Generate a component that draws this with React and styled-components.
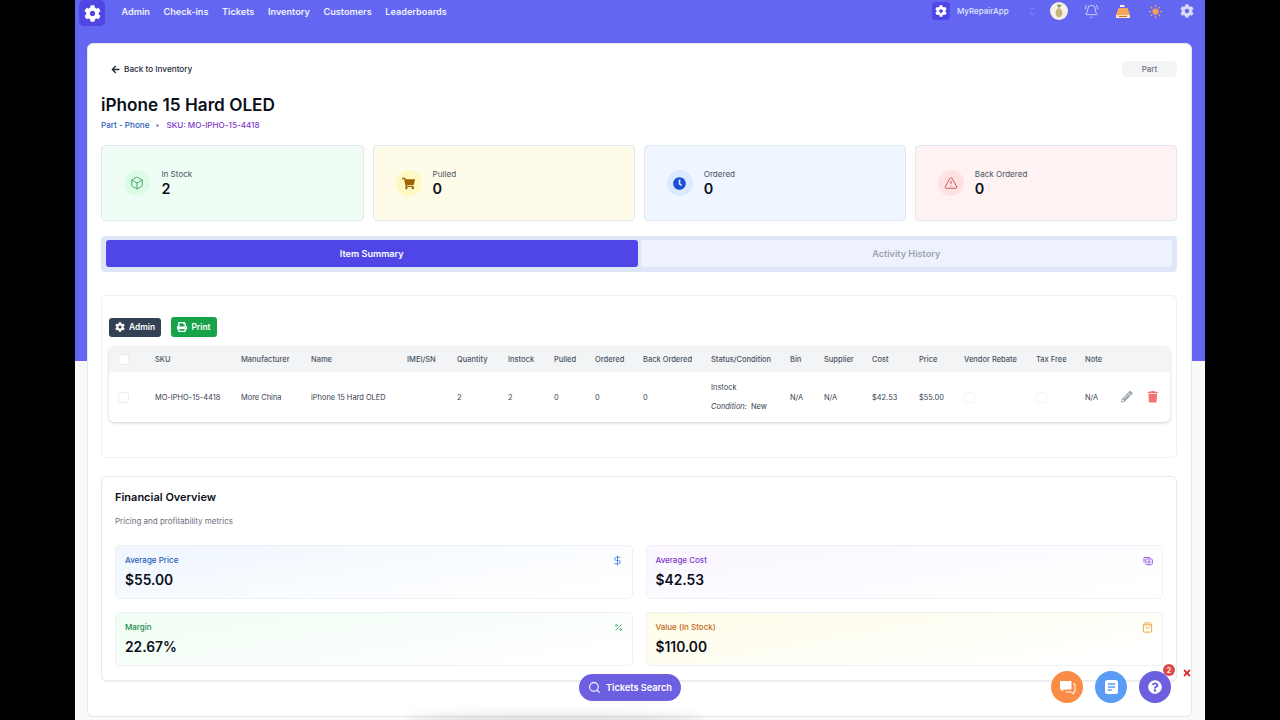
import React from "react";
import styled, { createGlobalStyle } from "styled-components";
import { FaCog, FaPrint, FaShoppingCart, FaClock, FaPencilAlt, FaTrash, FaQuestionCircle, FaTimes, FaArrowLeft } from "react-icons/fa";
import { Box, TriangleAlert, DollarSign, Percent, ShoppingBag, BellRing, ChevronsUpDown, Sun, Search } from "lucide-react";

const Global = createGlobalStyle`
  html, body { margin: 0; padding: 0; background: #000; overflow: hidden; }
  body { font-family: Inter, "Liberation Sans", sans-serif; color: #111827; }
`;

const Stage = styled.div`
  position: relative; width: 1130px; height: 720px; margin: 0 auto; overflow: hidden;
  background: linear-gradient(#6366f1 361px, #f9fafb 361px);
`;
const TopBar = styled.header`
  height: 26px; padding: 0 2px 0 4px; margin-bottom: 17px; display: flex; align-items: center; gap: 16.5px;
`;
const Logo = styled.div`
  width: 26px; height: 26px; border-radius: 5px; background: #4f46e5; color: #fff;
  display: flex; align-items: center; justify-content: center; font-size: 17px;
`;
const Nav = styled.nav`display: flex; gap: 13.6px; flex: 1; margin-bottom: 3px;`;
const NavLink = styled.a`font-size: 9.15px; font-weight: 600; color: #eef2ff; line-height: 23px;`;
const Tray = styled.div`display: flex; align-items: center; height: 22px; margin-bottom: 4px;`;
const TeamLogo = styled.div`
  width: 18px; height: 18px; border-radius: 4px; background: #4f46e5; color: #fff;
  display: flex; align-items: center; justify-content: center; font-size: 12px; margin-right: 7px;
`;
const TeamName = styled.span`width: 65px; font-size: 8px; font-weight: 500; color: #e0e7ff;`;
const Stepper = styled.span`width: 21px; display: flex; align-items: center; justify-content: center; color: #8f92f7;`;
const TrayIcon = styled.span`
  width: 32px; display: flex; align-items: center; justify-content: center; color: ${p => p.$c || "#e0e7ff"};
`;

const Card = styled.main`
  margin: 0 13px 0 12px; height: 674px; box-sizing: border-box; background: #fff; border-radius: 6px;
  border: 1px solid #e5e7eb; padding: 17px 14px 0 13px;
`;
const BackRow = styled.div`display: flex; justify-content: space-between; align-items: center; height: 16px; padding-left: 10px;`;
const BackLink = styled.a`display: flex; align-items: center; gap: 4px; font-size: 8.2px; font-weight: 500; color: #1f2937;`;
const TypeBadge = styled.span`
  width: 55px; height: 16px; border-radius: 5px; background: #f3f4f6; color: #6b7280; font-size: 8px; font-weight: 500;
  display: flex; align-items: center; justify-content: center;
`;
const Title = styled.h1`margin: 17px 0 0; font-size: 17.2px; line-height: 22px; font-weight: 600; color: #0b0f19;`;
const Sub = styled.div`display: flex; align-items: center; gap: 7px; margin-top: 4px; font-size: 8.1px; line-height: 11px; font-weight: 500;`;
const SubType = styled.span`color: #2b5cb8;`;
const SubSku = styled.span`color: #7e3ac8;`;
const Dot = styled.i`width: 3px; height: 3px; border-radius: 50%; background: #9ca3af;`;

const Stats = styled.section`display: grid; grid-template-columns: repeat(4, 1fr); gap: 9px; margin: 14px 0 0 .4px;`;
const Stat = styled.div`
  height: 76px; box-sizing: border-box; border: 1px solid #e1e7ec; border-radius: 4px; background: ${p => p.$bg};
  display: flex; align-items: center; gap: 11px; padding-left: 22px;
`;
const StatIcon = styled.div`
  width: 26px; height: 26px; border-radius: 50%; background: ${p => p.$bg}; color: ${p => p.$c};
  display: flex; align-items: center; justify-content: center; font-size: 13px;
`;
const StatLabel = styled.div`font-size: 8.1px; line-height: 10px; color: #4b5563;`;
const StatValue = styled.div`font-size: 14.4px; line-height: 18px; padding-top: 1px; font-weight: 600; color: #0b0f19;`;

const Tabs = styled.div`
  margin-top: 15px; height: 36px; box-sizing: border-box; padding: 4px 5px 5px; background: #e0e6f9; border-radius: 4px;
  display: grid; grid-template-columns: 1fr 1fr; gap: 3px;
`;
const Tab = styled.div`
  border-radius: 3px; display: flex; align-items: center; justify-content: center; font-size: 9.1px; font-weight: 600;
  background: ${p => p.$on ? "#4f46e5" : "#eef2ff"}; color: ${p => p.$on ? "#fff" : "#9ca3af"};
`;

const Panel = styled.section`
  border: 1px solid #f0f1f4; border-radius: 5px; background: #fff; box-sizing: border-box; height: ${p => p.$h}px; margin-top: ${p => p.$mt}px;
`;
const RaisedPanel = styled(Panel)`
  border-color: #e8eaee; box-shadow: 0 1px 1px rgba(0,0,0,.06);
`;
const Toolbar = styled.div`display: flex; align-items: center; gap: 10px; padding: 12px 0 0 7px; height: 50px; box-sizing: border-box;`;
const ActionBtn = styled.button`
  border: 0; height: ${p => p.$h}px; width: ${p => p.$w}px; border-radius: 3px; background: ${p => p.$bg}; color: #fff;
  font: 600 8.4px Inter, sans-serif; display: flex; align-items: center; justify-content: center; gap: 4px; padding: 0;
`;
const TableBox = styled.div`
  margin: 0 6px 0 7px; border-radius: 5px; background: #fff;
  box-shadow: 0 1px 3px rgba(0,0,0,.2);
`;
const cols = "37px 86px 70px 96px 50px 51px 46px 41px 48px 68px 79px 34px 48px 47px 45px 72px 49px 36px 1fr";
const Head = styled.div`
  display: grid; grid-template-columns: ${cols}; align-items: center; height: 26px; padding-left: 9px;
  background: #f3f4f6; border-radius: 5px 5px 0 0; font-size: 7.5px; font-weight: 500; color: #4b5563;
`;
const Row = styled.div`
  display: grid; grid-template-columns: ${cols}; align-items: center; height: 50px; padding-left: 9px;
  font-size: 7.45px; color: #374151;
`;
const Check = styled.span`display: block; width: 11px; height: 11px; box-sizing: border-box; border: 1px solid ${p => p.$soft ? "#f3f4f6" : "#e9ebef"}; border-radius: 3px; background: #fff;`;
const Status = styled.div`display: flex; flex-direction: column; gap: 9.5px; line-height: 10px; padding-top: 1px;`;
const Em = styled.em`margin-right: 4px;`;
const RowActions = styled.div`display: flex; align-items: center; gap: 14px; font-size: 11.5px;`;

const PanelHead = styled.h2`margin: 0; padding: 13px 0 0 13px; font-size: 11px; line-height: 14px; font-weight: 600; color: #0b0f19;`;
const PanelSub = styled.p`margin: 12px 0 0; padding-left: 13px; font-size: 8px; line-height: 11px; color: #6b7280;`;
const Metrics = styled.div`display: grid; grid-template-columns: 1fr 1fr; gap: 13px; margin: 18px 13px 0 13px;`;
const Metric = styled.div`
  height: 54px; box-sizing: border-box; padding: 9px 9px 0; border: 1px solid #f0f1f5; border-radius: 5px;
  background: linear-gradient(170deg, ${p => p.$bg}, #fff 90%); display: grid; grid-template-columns: 1fr auto; align-content: start;
`;
const MetricLabel = styled.div`font-size: 8px; line-height: 11px; font-weight: 500; color: ${p => p.$c};`;
const MetricIcon = styled.div`color: ${p => p.$c}; height: 11px; display: flex; align-items: center;`;
const MetricValue = styled.div`grid-column: 1 / 3; margin-top: 5px; font-size: 13.8px; line-height: 18px; font-weight: 600; color: #0b0f19;`;

const Glow = styled.div`
  position: absolute; left: 330px; top: 716px; width: 300px; height: 10px; border-radius: 50%;
  background: rgba(0,0,0,.16); filter: blur(6px);
`;
const SearchBtn = styled.button`
  position: absolute; left: 504px; top: 674px; width: 102px; height: 27px; border: 0; border-radius: 14px; background: #6c5fe0; color: #fff;
  font: 600 9.2px Inter, sans-serif; display: flex; align-items: center; justify-content: center; gap: 5px; padding: 0;
`;
const Fab = styled.button`
  position: absolute; left: ${p => p.$x}px; top: 671px; width: 32px; height: 32px; border: 0; border-radius: 50%; background: ${p => p.$bg}; color: #fff;
  display: flex; align-items: center; justify-content: center; padding: 0; font-size: 14px;
`;
const Badge = styled.span`
  position: absolute; left: 1088px; top: 664px; width: 12px; height: 12px; border-radius: 50%; background: #dc4a4a; color: #fff;
  font-size: 7px; font-weight: 600; display: flex; align-items: center; justify-content: center;
`;
const Close = styled.span`position: absolute; left: 1107px; top: 668px; color: #dc2626; font-size: 10px; line-height: 10px;`;

const Gear = () => <FaCog />;
const Avatar = () => (
  <svg width="18" height="18" viewBox="0 0 18 18">
    <circle cx="9" cy="9" r="9" fill="#f5f1e6" />
    <path d="M9 6c3 1 4 4 3 7-1 3-5 3-6 0-1-3 0-6 3-7z" fill="#c9b27c" />
    <path d="M9 6 6 2.5l2 1L9 1.5l1 2 2.5-1z" fill="#7d9a4a" />
  </svg>
);
const Register = () => (
  <svg width="16" height="16" viewBox="0 0 16 16">
    <path d="M5 2h4l1 2H5z" fill="#fdeee0" />
    <path d="M3.500 5h9L15 12H1z" fill="#f9a65a" />
    <rect x="1" y="12" width="14" height="3" fill="#fbe3c8" />
    <rect x="4" y="13" width="8" height="1" fill="#c8742c" />
  </svg>
);
const Coins = () => (
  <svg width="10" height="10" viewBox="0 0 10 10" fill="none" stroke="currentColor" strokeWidth="1">
    <path d="M1 6.500V1.500h6" />
    <rect x="2.800" y="3" width="6.500" height="5.700" rx="1" />
    <circle cx="6" cy="5.900" r="1.200" />
  </svg>
);
const Chat = () => (
  <svg width="17" height="15" viewBox="0 0 17 15">
    <path d="M1 1h11.500v8.500H5L2.500 11.500V9.500H1z" fill="#fff" />
    <path d="M14 4h2v8h-1.500v2l-2.500-2H6.500" fill="none" stroke="#fff" strokeWidth="1" />
  </svg>
);
const Doc = () => (
  <svg width="15" height="16" viewBox="0 0 15 16">
    <rect x="1" y="1" width="13" height="14" rx="2.500" fill="#fff" />
    <path d="M3.800 5h7.400M3.800 8h7.400M3.800 11h4" stroke="#5b9cf6" strokeWidth="1.300" />
  </svg>
);

const nav = ["Admin", "Check-ins", "Tickets", "Inventory", "Customers", "Leaderboards"];
const headers = ["SKU", "Manufacturer", "Name", "IMEI/SN", "Quantity", "Instock", "Pulled", "Ordered", "Back Ordered", "Status/Condition", "Bin", "Supplier", "Cost", "Price", "Vendor Rebate", "Tax Free", "Note"];

export default function App() {
  return (
    <Stage>
      <Global />
      <TopBar>
        <Logo><Gear /></Logo>
        <Nav>{nav.map(n => <NavLink key={n}>{n}</NavLink>)}</Nav>
        <Tray>
          <TeamLogo><Gear /></TeamLogo>
          <TeamName>MyRepairApp</TeamName>
          <Stepper><ChevronsUpDown size={11} /></Stepper>
          <TrayIcon><Avatar /></TrayIcon>
          <TrayIcon><BellRing size={15} strokeWidth={1.3} /></TrayIcon>
          <TrayIcon><Register /></TrayIcon>
          <TrayIcon $c="#f59e5b"><Sun size={15} fill="#f59e5b" /></TrayIcon>
          <TrayIcon $c="#d9dcf8"><FaCog size={14} /></TrayIcon>
        </Tray>
      </TopBar>

      <Card>
        <BackRow>
          <BackLink><FaArrowLeft size={9} />Back to Inventory</BackLink>
          <TypeBadge>Part</TypeBadge>
        </BackRow>
        <Title>iPhone 15 Hard OLED</Title>
        <Sub><SubType>Part - Phone</SubType><Dot /><SubSku>SKU: MO-IPHO-15-4418</SubSku></Sub>

        <Stats>
          <Stat $bg="#f0fdf4">
            <StatIcon $bg="#dcfce7" $c="#15803d"><Box size={14} strokeWidth={1.2} /></StatIcon>
            <div><StatLabel>In Stock</StatLabel><StatValue>2</StatValue></div>
          </Stat>
          <Stat $bg="#fefce8">
            <StatIcon $bg="#fef9c3" $c="#a16207"><FaShoppingCart /></StatIcon>
            <div><StatLabel>Pulled</StatLabel><StatValue>0</StatValue></div>
          </Stat>
          <Stat $bg="#eff6ff">
            <StatIcon $bg="#dbeafe" $c="#1d4ed8"><FaClock /></StatIcon>
            <div><StatLabel>Ordered</StatLabel><StatValue>0</StatValue></div>
          </Stat>
          <Stat $bg="#fef2f2">
            <StatIcon $bg="#fee2e2" $c="#b91c1c"><TriangleAlert size={14} strokeWidth={1.2} /></StatIcon>
            <div><StatLabel>Back Ordered</StatLabel><StatValue>0</StatValue></div>
          </Stat>
        </Stats>

        <Tabs>
          <Tab $on>Item Summary</Tab>
          <Tab>Activity History</Tab>
        </Tabs>

        <Panel $h={163} $mt={23}>
          <Toolbar>
            <ActionBtn $bg="#334155" $w={52} $h={19}><FaCog size={10} />Admin</ActionBtn>
            <ActionBtn $bg="#16a34a" $w={46} $h={20}><FaPrint size={10} />Print</ActionBtn>
          </Toolbar>
          <TableBox>
            <Head>
              <Check />
              {headers.map(h => <span key={h}>{h}</span>)}
            </Head>
            <Row>
              <Check />
              <span>MO-IPHO-15-4418</span><span>More China</span><span>iPhone 15 Hard OLED</span><span />
              <span>2</span><span>2</span><span>0</span><span>0</span><span>0</span>
              <Status><span>Instock</span><span><Em>Condition:</Em>New</span></Status>
              <span>N/A</span><span>N/A</span><span>$42.53</span><span>$55.00</span>
              <Check $soft /><Check $soft />
              <span>N/A</span>
              <RowActions>
                <FaPencilAlt color="#9ca3af" />
                <FaTrash color="#f87171" />
              </RowActions>
            </Row>
          </TableBox>
        </Panel>

        <RaisedPanel $h={205} $mt={18}>
          <PanelHead>Financial Overview</PanelHead>
          <PanelSub>Pricing and profitability metrics</PanelSub>
          <Metrics>
            <Metric $bg="#eff6ff">
              <MetricLabel $c="#2b5cb8">Average Price</MetricLabel>
              <MetricIcon $c="#4f86e8"><DollarSign size={11} /></MetricIcon>
              <MetricValue>$55.00</MetricValue>
            </Metric>
            <Metric $bg="#faf5ff">
              <MetricLabel $c="#7e3ac8">Average Cost</MetricLabel>
              <MetricIcon $c="#9b5de5"><Coins /></MetricIcon>
              <MetricValue>$42.53</MetricValue>
            </Metric>
            <Metric $bg="#f0fdf4">
              <MetricLabel $c="#1f8a4c">Margin</MetricLabel>
              <MetricIcon $c="#2a9d5c"><Percent size={9} /></MetricIcon>
              <MetricValue>22.67%</MetricValue>
            </Metric>
            <Metric $bg="#fefce8">
              <MetricLabel $c="#c2691a">Value (In Stock)</MetricLabel>
              <MetricIcon $c="#e8a03a"><ShoppingBag size={11} /></MetricIcon>
              <MetricValue>$110.00</MetricValue>
            </Metric>
          </Metrics>
        </RaisedPanel>
      </Card>

      <Glow />
      <SearchBtn><Search size={13} strokeWidth={2} />Tickets Search</SearchBtn>
      <Fab $x={976} $bg="#fb8c45"><Chat /></Fab>
      <Fab $x={1020} $bg="#5b9cf6"><Doc /></Fab>
      <Fab $x={1064} $bg="#6c5fe0"><FaQuestionCircle size={14} /></Fab>
      <Badge>2</Badge>
      <Close><FaTimes /></Close>
    </Stage>
  );
}
